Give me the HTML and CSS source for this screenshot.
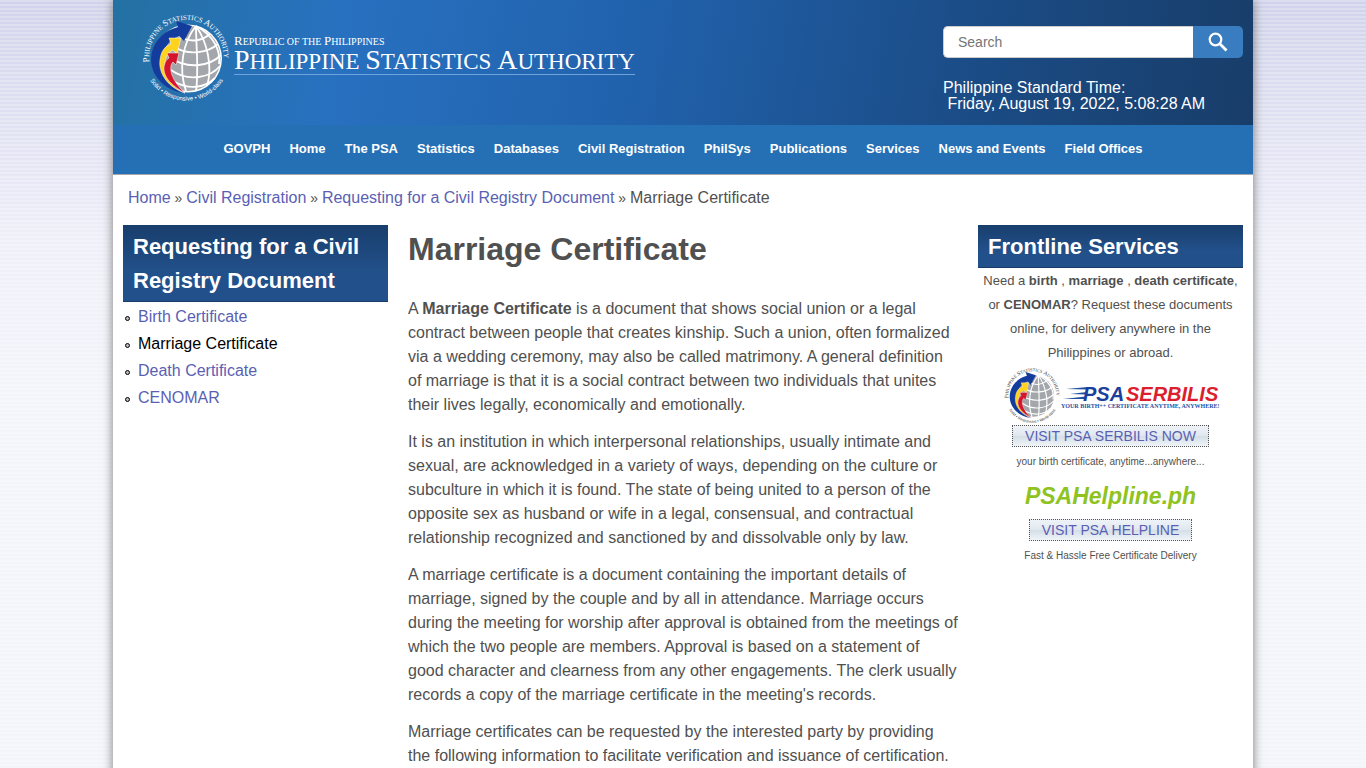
FILE: index.html
```html
<!DOCTYPE html>
<html lang="en">
<head>
  <meta charset="UTF-8">
  <meta name="viewport" content="width=device-width, initial-scale=1">
  <title>Marriage Certificate | Philippine Statistics Authority</title>
  <link rel="stylesheet" href="styles.css">
</head>
<body>

<!-- shared seal, text takes the current color -->
<svg class="defs" width="0" height="0" aria-hidden="true">
  <defs>
    <path id="arcTop" d="M8.3 52.1 A37.5 37.5 0 1 1 82.7 52.1"/>
    <path id="arcBottom" d="M9 70.3 A43 43 0 0 0 82 70.3"/>
    <symbol id="seal" viewBox="0 0 90 94">
      <circle cx="47" cy="48.5" r="34" fill="#fff"/>
      <circle cx="47" cy="48.5" r="32.5" fill="#a3a6aa"/>
      <g fill="none" stroke="#fff" stroke-width="1.8">
        <path d="M55 16 C42 32 37 58 45 81"/>
        <path d="M55 16 C55 36 58 60 55 81"/>
        <path d="M55 16 C66 32 72 56 66 76"/>
        <path d="M55 16 C72 25 80 40 78 54"/>
        <path d="M38 26 C50 34 62 30 69 24"/>
        <path d="M32 36 C48 47 68 42 77 34"/>
        <path d="M28 47 C48 61 70 55 80 45"/>
        <path d="M30 60 C48 73 70 67 79 56"/>
        <path d="M34 72 C48 80 64 78 74 68"/>
      </g>
      <path d="M44 83 C22 81 6 62 11 42 C14 29 25 20 37 17 L35 11 L51 16 L43 31 L38 26 C27 30 21 40 22 52 C23 66 30 76 44 83Z" fill="#143c9c"/>
      <path d="M44 83 C28 78 17 64 19 50 C20 41 24 36 30 34 L28 28 L40 28 L36 44 L32 40 C26 43 23 50 24 58 C25 68 32 78 44 83Z" fill="#ffd21c" stroke="#fff" stroke-width=".5"/>
      <path d="M44 83 C31 76 22 67 23 57 C24 52 25 50 28 48 L26 43 L38 43 L35 55 L32 52 C27 57 30 70 44 83Z" fill="#d5152c" stroke="#fff" stroke-width=".5"/>
      <text class="seal-name" fill="currentColor"><textPath href="#arcTop"><tspan class="seal-cap">P</tspan>HILIPPINE <tspan class="seal-cap">S</tspan>TATISTICS <tspan class="seal-cap">A</tspan>UTHORITY</textPath></text>
      <text class="seal-motto" fill="currentColor"><textPath href="#arcBottom">Solid • Responsive • World-class</textPath></text>
    </symbol>
  </defs>
</svg>

<div class="page">
  <header class="header">
    <a class="brand" href="#">
      <svg class="brand-seal" role="img" aria-label="PSA seal"><use href="#seal"/></svg>
      <span class="brand-text">
        <span class="brand-country"><b>R</b>EPUBLIC OF THE <b>P</b>HILIPPINES</span>
        <span class="brand-name"><b>P</b>HILIPPINE <b>S</b>TATISTICS <b>A</b>UTHORITY</span>
      </span>
    </a>
    <div class="header-side">
      <form class="search" onsubmit="return false;">
        <input type="text" placeholder="Search" aria-label="Search">
        <button type="submit" aria-label="Submit search">
          <svg width="20" height="20" viewBox="0 0 20 20" fill="none" stroke="#fff">
            <circle cx="7.5" cy="7.5" r="5.8" stroke-width="2.2"/>
            <path d="M12 12 L18.5 18.5" stroke-width="2.8"/>
          </svg>
        </button>
      </form>
      <div class="clock">Philippine Standard Time:<br>&nbsp;Friday, August 19, 2022, 5:08:28 AM</div>
    </div>
  </header>

  <nav class="menu">
    <a href="#">GOVPH</a>
    <a href="#">Home</a>
    <a href="#">The PSA</a>
    <a href="#">Statistics</a>
    <a href="#">Databases</a>
    <a href="#">Civil Registration</a>
    <a href="#">PhilSys</a>
    <a href="#">Publications</a>
    <a href="#">Services</a>
    <a href="#">News and Events</a>
    <a href="#">Field Offices</a>
  </nav>

  <div class="breadcrumb"><a href="#">Home</a><span class="sep"> » </span><a href="#">Civil Registration</a><span class="sep"> » </span><a href="#">Requesting for a Civil Registry Document</a><span class="sep"> » </span>Marriage Certificate</div>

  <div class="columns">
    <aside class="sidebar">
      <h2 class="block-title">Requesting for a Civil Registry Document</h2>
      <ul class="side-menu">
        <li><a href="#">Birth Certificate</a></li>
        <li><a class="active" href="#">Marriage Certificate</a></li>
        <li><a href="#">Death Certificate</a></li>
        <li><a href="#">CENOMAR</a></li>
      </ul>
    </aside>

    <main class="content">
      <h1>Marriage Certificate</h1>
      <p>A <strong>Marriage Certificate</strong> is a document that shows social union or a legal contract between people that creates kinship. Such a union, often formalized via a wedding ceremony, may also be called matrimony. A general definition of marriage is that it is a social contract between two individuals that unites their lives legally, economically and emotionally.</p>
      <p>It is an institution in which interpersonal relationships, usually intimate and sexual, are acknowledged in a variety of ways, depending on the culture or subculture in which it is found. The state of being united to a person of the opposite sex as husband or wife in a legal, consensual, and contractual relationship recognized and sanctioned by and dissolvable only by law.</p>
      <p>A marriage certificate is a document containing the important details of marriage, signed by the couple and by all in attendance. Marriage occurs during the meeting for worship after approval is obtained from the meetings of which the two people are members. Approval is based on a statement of good character and clearness from any other engagements. The clerk usually records a copy of the marriage certificate in the meeting's records.</p>
      <p>Marriage certificates can be requested by the interested party by providing the following information to facilitate verification and issuance of certification.</p>
    </main>

    <aside class="sidebar">
      <h2 class="block-title">Frontline Services</h2>
      <div class="frontline">
        <p class="intro">Need a <strong>birth</strong> , <strong>marriage</strong> , <strong>death certificate</strong>, or <strong>CENOMAR</strong>? Request these documents online, for delivery anywhere in the Philippines or abroad.</p>
        <svg class="serbilis" viewBox="0 0 218 60" role="img" aria-label="PSA Serbilis">
          <use href="#seal" x="0" y="0" width="60" height="60"/>
          <g fill="#1f4fa3">
            <path d="M64 24 L86 22 V24.5Z"/>
            <path d="M68 29 L85 27 V29.5Z"/>
            <path d="M61 34 L84 31.5 V34Z"/>
          </g>
          <text class="serbilis-name" x="81" y="36" fill="#1b3f9c">PSA</text>
          <text class="serbilis-name" x="124" y="36" fill="#dc1f2e">SERBILIS</text>
          <text class="serbilis-tag" x="59" y="43" fill="#1f4fa3">YOUR BIRTH++ CERTIFICATE ANYTIME, ANYWHERE!</text>
        </svg>
        <a class="visit" href="#">VISIT PSA SERBILIS NOW</a>
        <p class="note">your birth certificate, anytime...anywhere...</p>
        <div class="helpline">PSAHelpline.ph</div>
        <a class="visit" href="#">VISIT PSA HELPLINE</a>
        <p class="note">Fast &amp; Hassle Free Certificate Delivery</p>
      </div>
    </aside>
  </div>
</div>

</body>
</html>
```
FILE: styles.css
```css
* {
  box-sizing: border-box;
}
body {
  margin: 0;
  font-family: "Liberation Sans", Arial, sans-serif;
  font-size: 16px;
  line-height: 24px;
  color: #505050;
  background:
    repeating-linear-gradient(rgba(255, 255, 255, 0.25) 0 2px, rgba(255, 255, 255, 0) 2px 4px),
    linear-gradient(#d0d3eb, #efeff9 240px, #f3f5fa 400px);
}
a {
  color: #5a5fb4;
  text-decoration: none;
}
.defs {
  position: absolute;
}
.page {
  max-width: 1140px;
  margin: 0 auto;
  background: #fff;
  box-shadow: 0 0 10px #777;
}

/* header */
.header {
  display: flex;
  justify-content: space-between;
  height: 125px;
  padding: 10px 10px 0 28px;
  background: linear-gradient(100deg, #2471a3 0%, #2871c0 20%, #2162ad 45%, #1b4c86 75%, #183d69 100%);
}
.brand {
  display: flex;
  gap: 3px;
  color: #fff;
}
.brand-seal {
  width: 90px;
  height: 94px;
}
.brand-text {
  display: flex;
  flex-direction: column;
  align-self: flex-start;
  margin-top: 25px;
  border-bottom: 1px solid #6fa3dc;
  font-family: "Liberation Serif", "Times New Roman", serif;
  white-space: nowrap;
}
.brand-text b {
  font-weight: 400;
  line-height: 0;
}
.brand-country {
  font-size: 10px;
  line-height: 14px;
}
.brand-country b {
  font-size: 13px;
}
.brand-name {
  font-size: 23px;
  line-height: 25px;
}
.brand-name b {
  font-size: 28px;
}
.seal-name {
  font: 7px "Liberation Serif", serif;
}
.seal-cap {
  font-size: 9px;
}
.seal-motto {
  font: 6px "Liberation Sans", sans-serif;
}
.header-side {
  width: 300px;
  padding-top: 16px;
}
.search {
  display: flex;
  height: 32px;
}
.search input {
  flex: 1;
  min-width: 0;
  padding: 0 14px;
  border: 1px solid #ccc;
  border-right: 0;
  border-radius: 5px 0 0 5px;
  font: 14px "Liberation Sans", Arial, sans-serif;
}
.search input::placeholder {
  color: #757575;
}
.search button {
  display: flex;
  align-items: center;
  justify-content: center;
  width: 50px;
  padding: 0;
  border: 0;
  border-radius: 0 5px 5px 0;
  background: #397cc0;
}
.clock {
  margin-top: 22px;
  line-height: 16px;
  color: #fff;
}

/* main menu */
.menu {
  display: flex;
  justify-content: center;
  gap: 19px;
  height: 50px;
  border-bottom: 1px solid #a3a7ae;
  background: #2570b5;
  font-size: 13px;
  font-weight: 700;
  line-height: 47px;
}
.menu a {
  color: #fff;
}

.breadcrumb {
  padding: 11px 15px 0;
}
.sep {
  font-size: 14px;
}

/* columns */
.columns {
  display: grid;
  grid-template-columns: 1fr 2fr 1fr;
  padding-top: 15px;
}
.sidebar,
.content {
  padding: 0 10px;
}
.block-title {
  margin: 0;
  padding: 5px 10px 3px;
  border-bottom: 1px solid #173a66;
  background: linear-gradient(#183e6c, #22508a 60%);
  color: #fff;
  font-size: 22px;
  line-height: 34px;
}
.side-menu {
  margin: 1px 0 0;
  padding: 0 0 0 2px;
  list-style: none;
  line-height: 27px;
}
.side-menu li {
  display: flex;
  align-items: center;
  gap: 8px;
}
.side-menu li::before {
  content: "";
  width: 3px;
  height: 3px;
  margin-top: 3px;
  border: 1px solid #000;
  border-radius: 50%;
  background: #bbb;
}
.side-menu .active {
  color: #000;
}
.content h1 {
  margin: 0 0 24px;
  font-size: 32px;
  line-height: 48px;
}
.content p {
  margin: 0 0 13px;
}

/* frontline services */
.frontline {
  display: flex;
  flex-direction: column;
  align-items: center;
  padding-top: 1px;
  text-align: center;
}
.frontline .intro {
  margin: 0;
  font-size: 13px;
}
.serbilis {
  width: 218px;
  height: 60px;
  color: #333;
}
.serbilis-name {
  font: italic bold 20px "Liberation Sans", sans-serif;
}
.serbilis-tag {
  font: bold 6px "Liberation Serif", serif;
}
.visit {
  padding: 0 12px;
  border: 1px dotted #555;
  background: linear-gradient(#eef3f8, #dfe7ee 50%, #d3dee6 50%, #f0f4f8);
  font-size: 14px;
  line-height: 20px;
}
.frontline .note {
  margin: 5px 0 3px;
  font-size: 10px;
  line-height: 20px;
}
.helpline {
  padding-bottom: 2px;
  color: #8fc31f;
  font-size: 23px;
  font-style: italic;
  font-weight: 700;
  line-height: 42px;
}
```
